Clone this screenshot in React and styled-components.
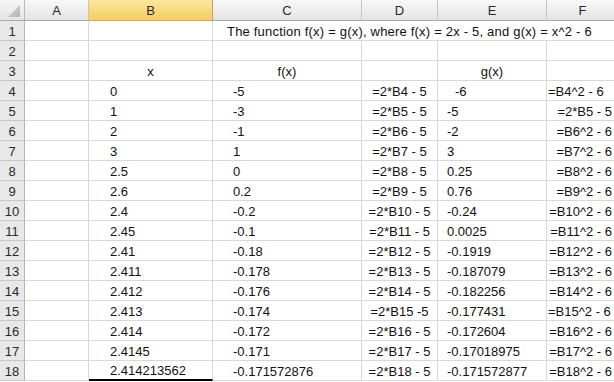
import React from "react";
import styled, { createGlobalStyle } from "styled-components";

const Global = createGlobalStyle`
  html, body { margin: 0; padding: 0; background: #ffffff; overflow: hidden; }
  body { font-family: "Liberation Sans", Arial, sans-serif; }
`;

const Sheet = styled.div`
  display: grid;
  grid-template-columns: 25px 64px 124px 149px 76px 109px 72px;
  grid-template-rows: 21px repeat(18, 20px);
  width: 619px;
  font-family: "Liberation Sans", Arial, sans-serif;
  font-size: 13px;
  color: #111;
`;

const Corner = styled.div`
  box-sizing: border-box;
  position: relative;
  background: linear-gradient(#f6f6f6, #e4e4e4);
  border-right: 1px solid #b9b9b9;
  border-bottom: 1px solid #a9a9a9;
`;

const CornerMark = styled.svg`
  position: absolute;
  right: 3px;
  bottom: 2px;
`;

const ColHeader = styled.div`
  box-sizing: border-box;
  display: flex;
  align-items: center;
  justify-content: center;
  padding-top: 1px;
  color: #2a2a2a;
  background: ${(p) =>
    p.$selected
      ? "linear-gradient(#fbe79c, #f6cd62)"
      : "linear-gradient(#f8f8f8, #e4e4e4)"};
  border-right: 1px solid ${(p) => (p.$selected ? "#c9a54a" : "#c6c6c6")};
  border-bottom: 1px solid ${(p) => (p.$selected ? "#e3a43a" : "#a9a9a9")};
`;

const RowHeader = styled.div`
  box-sizing: border-box;
  display: flex;
  align-items: center;
  justify-content: center;
  padding-top: 1px;
  color: #2a2a2a;
  background: #e8e8e8;
  border-right: 1px solid #b4b4b4;
  border-bottom: 1px solid #c6c6c6;
`;

const Cell = styled.div`
  box-sizing: border-box;
  display: flex;
  align-items: center;
  padding-top: 1px;
  white-space: nowrap;
  overflow: visible;
  justify-content: ${(p) =>
    p.$align === "center" ? "center" : p.$align === "right" ? "flex-end" : "flex-start"};
  padding-left: ${(p) => (p.$align === "left" ? `${p.$pad ?? 0}px` : "0")};
  padding-right: ${(p) => (p.$align === "right" ? `${p.$pad ?? 0}px` : "0")};
  border-right: 1px solid #d8d8d8;
  border-bottom: ${(p) => (p.$thick ? "2px solid #000" : "1px solid #d8d8d8")};
  ${(p) => (p.$span ? `grid-column: span ${p.$span};` : "")}
`;

const Title = styled.span`
  letter-spacing: 0.2px;
`;

const cols = ["A", "B", "C", "D", "E", "F"];

const data = [
  ["0", "-5", "=2*B4 - 5", "-6", "=B4^2 - 6"],
  ["1", "-3", "=2*B5 - 5", "-5", "=2*B5 - 5"],
  ["2", "-1", "=2*B6 - 5", "-2", "=B6^2 - 6"],
  ["3", "1", "=2*B7 - 5", "3", "=B7^2 - 6"],
  ["2.5", "0", "=2*B8 - 5", "0.25", "=B8^2 - 6"],
  ["2.6", "0.2", "=2*B9 - 5", "0.76", "=B9^2 - 6"],
  ["2.4", "-0.2", "=2*B10 - 5", "-0.24", "=B10^2 - 6"],
  ["2.45", "-0.1", "=2*B11 - 5", "0.0025", "=B11^2 - 6"],
  ["2.41", "-0.18", "=2*B12 - 5", "-0.1919", "=B12^2 - 6"],
  ["2.411", "-0.178", "=2*B13 - 5", "-0.187079", "=B13^2 - 6"],
  ["2.412", "-0.176", "=2*B14 - 5", "-0.182256", "=B14^2 - 6"],
  ["2.413", "-0.174", "=2*B15 -5", "-0.177431", "=B15^2 - 6"],
  ["2.414", "-0.172", "=2*B16 - 5", "-0.172604", "=B16^2 - 6"],
  ["2.4145", "-0.171", "=2*B17 - 5", "-0.17018975", "=B17^2 - 6"],
  ["2.414213562", "-0.171572876", "=2*B18 - 5", "-0.171572877", "=B18^2 - 6"],
];

export default function App() {
  return (
    <>
      <Global />
      <Sheet>
        <Corner>
          <CornerMark width="13" height="13" viewBox="0 0 13 13">
            <defs>
              <linearGradient id="cg" x1="0" y1="0" x2="1" y2="1">
                <stop offset="0" stopColor="#d6d6d6" />
                <stop offset="1" stopColor="#b4b4b4" />
              </linearGradient>
            </defs>
            <polygon points="12,0 12,12 0,12" fill="url(#cg)" />
          </CornerMark>
        </Corner>
        {cols.map((c) => (
          <ColHeader key={c} $selected={c === "B"}>
            {c}
          </ColHeader>
        ))}

        {/* Row 1 */}
        <RowHeader>1</RowHeader>
        <Cell />
        <Cell />
        <Cell $span={4} $align="left" $pad={14}>
          <Title>The function f(x) = g(x), where f(x) = 2x - 5, and g(x) = x^2 - 6</Title>
        </Cell>

        {/* Row 2 */}
        <RowHeader>2</RowHeader>
        {cols.map((c) => (
          <Cell key={c} />
        ))}

        {/* Row 3 */}
        <RowHeader>3</RowHeader>
        <Cell />
        <Cell $align="center">x</Cell>
        <Cell $align="center">f(x)</Cell>
        <Cell />
        <Cell $align="center">g(x)</Cell>
        <Cell />

        {data.map((r, i) => {
          const rowNo = i + 4;
          const last = rowNo === 18;
          const fLeft = rowNo === 4 || rowNo === 15;
          return (
            <React.Fragment key={rowNo}>
              <RowHeader>{rowNo}</RowHeader>
              <Cell />
              <Cell $align="left" $pad={21} $thick={last}>
                {r[0]}
              </Cell>
              <Cell $align="left" $pad={20}>
                {r[1]}
              </Cell>
              <Cell $align="center">{r[2]}</Cell>
              <Cell $align="left" $pad={rowNo === 4 ? 17 : 9}>
                {r[3]}
              </Cell>
              <Cell $align={fLeft ? "left" : "right"} $pad={fLeft ? 1 : 6}>
                {r[4]}
              </Cell>
            </React.Fragment>
          );
        })}
      </Sheet>
    </>
  );
}
